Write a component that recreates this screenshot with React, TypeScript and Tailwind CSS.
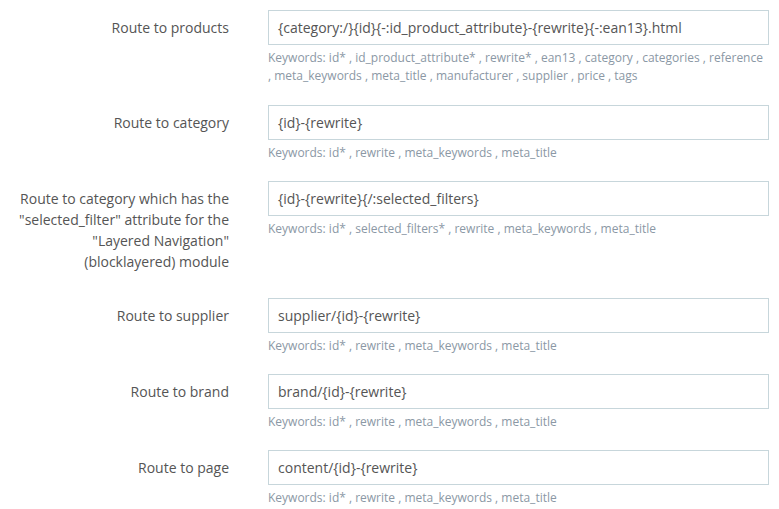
import React from "react";

type Row = { label: string[]; value: string; help: string[] };

const rows: Row[] = [
  {
    label: ["Route to products"],
    value: "{category:/}{id}{-:id_product_attribute}-{rewrite}{-:ean13}.html",
    help: [
      "Keywords: id* , id_product_attribute* , rewrite* , ean13 , category , categories , reference",
      ", meta_keywords , meta_title , manufacturer , supplier , price , tags",
    ],
  },
  {
    label: ["Route to category"],
    value: "{id}-{rewrite}",
    help: ["Keywords: id* , rewrite , meta_keywords , meta_title"],
  },
  {
    label: [
      "Route to category which has the",
      "\"selected_filter\" attribute for the",
      "\"Layered Navigation\"",
      "(blocklayered) module",
    ],
    value: "{id}-{rewrite}{/:selected_filters}",
    help: ["Keywords: id* , selected_filters* , rewrite , meta_keywords , meta_title"],
  },
  {
    label: ["Route to supplier"],
    value: "supplier/{id}-{rewrite}",
    help: ["Keywords: id* , rewrite , meta_keywords , meta_title"],
  },
  {
    label: ["Route to brand"],
    value: "brand/{id}-{rewrite}",
    help: ["Keywords: id* , rewrite , meta_keywords , meta_title"],
  },
  {
    label: ["Route to page"],
    value: "content/{id}-{rewrite}",
    help: ["Keywords: id* , rewrite , meta_keywords , meta_title"],
  },
];

export default function App() {
  return (
    <div
      className="w-[779px] h-[509px] bg-white overflow-hidden pt-[10px]"
      style={{ fontFamily: '"Open Sans", "Noto Sans", sans-serif' }}
    >
      {rows.map((r, i) => (
        <div
          key={i}
          className={
            r.help.length > 1
              ? "flex items-start h-[95px]"
              : r.label.length > 1
              ? "flex items-start h-[117px]"
              : "flex items-start h-[76px]"
          }
        >
          <div className="w-[229px] shrink-0 text-right text-[14px] leading-[21px] text-[#555555] pt-[7px]">
            {r.label.map((l, j) => (
              <div key={j} className="whitespace-nowrap">
                {l}
              </div>
            ))}
          </div>
          <div className="ml-[39px] w-[501px] shrink-0">
            <div className="h-[35px] border border-[#c7d6db] bg-white px-[9px] flex items-center text-[14px] text-[#555555] whitespace-nowrap">
              {r.value}
            </div>
            <div className="mt-[4px] text-[12px] leading-[18px] text-[#8b98a5]">
              {r.help.map((h, j) => (
                <div key={j} className="whitespace-nowrap">
                  {h}
                </div>
              ))}
            </div>
          </div>
        </div>
      ))}
    </div>
  );
}
